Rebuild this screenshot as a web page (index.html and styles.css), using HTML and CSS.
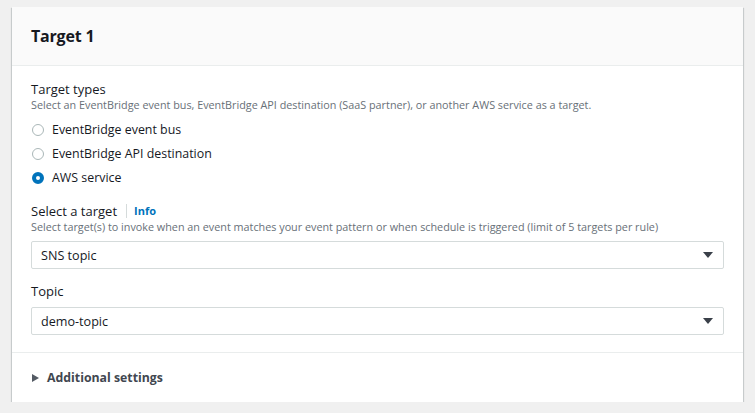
FILE: index.html
```html
<!DOCTYPE html>
<html>
<head>
<meta charset="utf-8">
<link rel="stylesheet" href="styles.css">
</head>
<body>
<div class="card">
  <div class="card-header"><h2 class="title">Target 1</h2></div>
  <div class="card-body">
    <div class="field">
      <div class="label">Target types</div>
      <div class="desc">Select an EventBridge event bus, EventBridge API destination (SaaS partner), or another AWS service as a target.</div>
      <div class="radios">
        <div class="radio"><span class="dot"></span><span>EventBridge event bus</span></div>
        <div class="radio"><span class="dot"></span><span>EventBridge API destination</span></div>
        <div class="radio"><span class="dot checked"></span><span>AWS service</span></div>
      </div>
    </div>
    <div class="field">
      <div class="label">Select a target <span class="sep"></span><a class="info">Info</a></div>
      <div class="desc">Select target(s) to invoke when an event matches your event pattern or when schedule is triggered (limit of 5 targets per rule)</div>
      <div class="select"><span>SNS topic</span><span class="caret"></span></div>
    </div>
    <div class="field">
      <div class="label">Topic</div>
      <div class="select"><span>demo-topic</span><span class="caret"></span></div>
    </div>
  </div>
  <div class="card-footer">
    <span class="tri"></span><span class="expand">Additional settings</span>
  </div>
</div>
</body>
</html>
```
FILE: styles.css
```css
* { box-sizing: border-box; }
html, body { margin: 0; }
body {
  background: #f0f0f0;
  padding: 7px 12px 0 12px;
  font-family: "Open Sans", "Liberation Sans", sans-serif;
  color: #16191f;
}
.card {
  width: 731px;
  height: 395px;
  background: #fff;
  box-shadow: 0 1px 1px 0 rgba(0,28,36,.3), 1px 1px 1px 0 rgba(0,28,36,.12), -1px 1px 1px 0 rgba(0,28,36,.12);
  display: flex;
  flex-direction: column;
}
.card-header {
  height: 59px;
  background: #fafafa;
  border-bottom: 1px solid #eaeded;
  display: flex;
  align-items: center;
  padding: 0 19px;
}
.title {
  margin: 0;
  font-size: 16px;
  font-weight: 700;
  letter-spacing: -0.2px;
}
.card-body {
  padding: 14px 19px 17px 19px;
  border-bottom: 1px solid #eaeded;
}
.field { margin-bottom: 13px; }
.field:last-child { margin-bottom: 0; }
.label {
  font-size: 13px;
  line-height: 18px;
  font-weight: 500;
  display: flex;
  align-items: center;
}
.sep {
  display: inline-block;
  width: 1px;
  height: 14px;
  background: #d5dbdb;
  margin: 0 7px 0 9px;
}
.info {
  color: #0073bb;
  font-weight: 700;
  font-size: 11px;
}
.desc {
  font-size: 10.8px;
  line-height: 14px;
  color: #687078;
}
.radios { margin-top: 5px; }
.radio {
  display: flex;
  align-items: center;
  height: 24px;
  font-size: 12.4px;
  font-weight: 500;
}
.dot {
  width: 12px;
  height: 12px;
  border-radius: 50%;
  border: 1.5px solid #aab7b8;
  margin: 1px 8px 0 1px;
}
.dot.checked {
  border: 4px solid #0073bb;
}
.select {
  margin-top: 7px;
  height: 28px;
  border: 1px solid #d5dbdb;
  border-radius: 2px;
  display: flex;
  align-items: center;
  justify-content: space-between;
  padding: 0 10px 0 9px;
  font-size: 12.6px;
  font-weight: 500;
}
.caret {
  width: 0;
  height: 0;
  border-left: 5px solid transparent;
  border-right: 5px solid transparent;
  border-top: 6.5px solid #3a4049;
}
.card-footer {
  flex: 1;
  display: flex;
  align-items: center;
  padding: 0 20px;
  font-size: 12.3px;
  font-weight: 700;
  color: #414750;
}
.tri {
  width: 0;
  height: 0;
  border-top: 4.5px solid transparent;
  border-bottom: 4.5px solid transparent;
  border-left: 7px solid #545b64;
  margin-right: 8px;
}
```
